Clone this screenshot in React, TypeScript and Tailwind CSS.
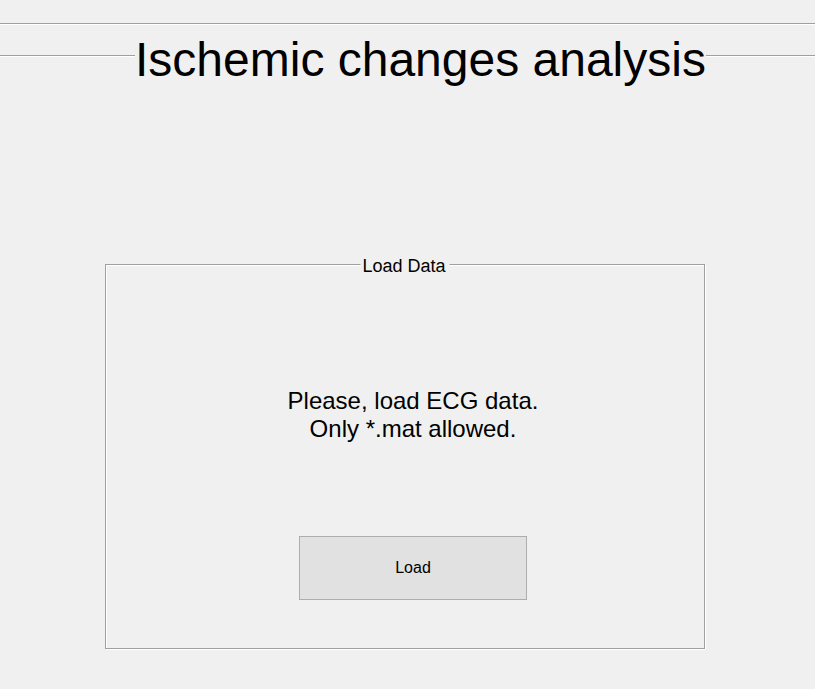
export default function App() {
  return (
    <div className="w-[815px] h-[689px] bg-[#f0f0f0] overflow-hidden text-black font-['Liberation_Sans',Arial,sans-serif]">
      {/* top etched rule */}
      <div className="mt-[23px] h-[2px] border-t border-b border-t-[#a0a0a0] border-b-white" />

      {/* title row with rule behind */}
      <div className="mt-[11px] flex items-start">
        <div className="w-[135px] mt-[19px] h-[2px] border-t border-b border-t-[#a0a0a0] border-b-white" />
        <h1 className="text-[48px] leading-[48px] whitespace-nowrap">Ischemic changes analysis</h1>
        <div className="flex-1 mt-[19px] h-[2px] border-t border-b border-t-[#a0a0a0] border-b-white" />
      </div>

      {/* Load Data panel */}
      <div className="relative ml-[105px] mt-[180px] w-[600px] h-[385px] border border-[#a0a0a0] shadow-[1px_1px_0_#fff,inset_1px_1px_0_#fff] pl-[16px] pt-[122px] flex flex-col items-center">
        <span className="absolute left-1/2 -translate-x-1/2 top-[-9px] bg-[#f0f0f0] pl-[2px] pr-[4px] text-[18px] leading-[20px] whitespace-nowrap">
          Load Data
        </span>

        <div className="text-[24px] leading-[28px] text-center whitespace-nowrap">
          <p>Please, load ECG data.</p>
          <p>Only *.mat allowed.</p>
        </div>

        <button className="mt-[93px] w-[228px] h-[64px] border border-[#adadad] bg-[#e1e1e1] text-[16px] flex items-center justify-center">
          Load
        </button>
      </div>
    </div>
  );
}
